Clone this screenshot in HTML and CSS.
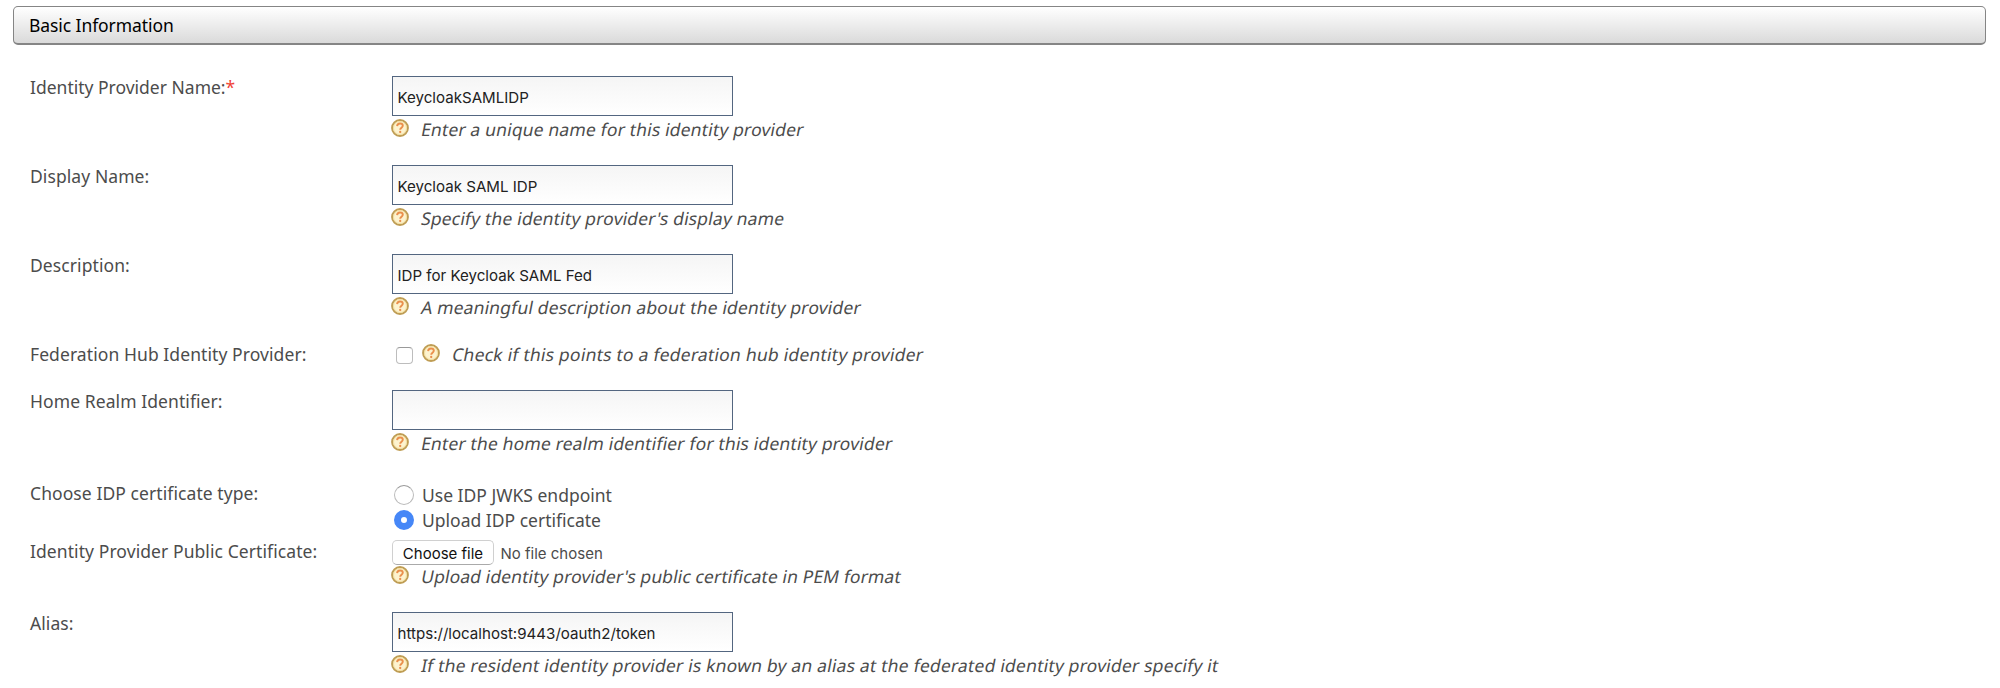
FILE: index.html
```html
<!DOCTYPE html>
<html lang="en">
<head>
<meta charset="utf-8">
<title>Basic Information</title>
<link rel="stylesheet" href="styles.css">
</head>
<body>
<svg class="defs" width="0" height="0">
  <symbol id="help" viewBox="0 0 18 18">
    <circle cx="9" cy="9" r="7.9" fill="#fdf3cf" stroke="#bf9d54" stroke-width="2"/>
    <circle cx="9" cy="9" r="6.5" fill="none" stroke="#f3dfa0" stroke-width="1"/>
    <path d="M6.1 7.1C6.2 5.3 7.4 4.5 9 4.5s2.8.9 2.8 2.3c0 1.9-2.6 1.9-2.6 3.9" fill="none" stroke="#ea8f4c" stroke-width="1.9"/>
    <circle cx="9.2" cy="13" r="1.15" fill="#ea8f4c"/>
  </symbol>
</svg>
<h2 class="section-title">Basic Information</h2>
<form class="form">
  <div class="row">
    <label class="label label-name">Identity Provider Name:<span class="required">*</span></label>
    <div class="field">
      <input class="input" type="text" value="KeycloakSAMLIDP">
      <div class="help"><svg class="icon"><use href="#help"/></svg><span class="hint">Enter a unique name for this identity provider</span></div>
    </div>
  </div>
  <div class="row">
    <label class="label">Display Name:</label>
    <div class="field">
      <input class="input" type="text" value="Keycloak SAML IDP">
      <div class="help"><svg class="icon"><use href="#help"/></svg><span class="hint">Specify the identity provider's display name</span></div>
    </div>
  </div>
  <div class="row">
    <label class="label">Description:</label>
    <div class="field">
      <input class="input" type="text" value="IDP for Keycloak SAML Fed">
      <div class="help"><svg class="icon"><use href="#help"/></svg><span class="hint">A meaningful description about the identity provider</span></div>
    </div>
  </div>
  <div class="row row-check">
    <label class="label">Federation Hub Identity Provider:</label>
    <div class="field field-check">
      <input class="checkbox" type="checkbox">
      <div class="help"><svg class="icon"><use href="#help"/></svg><span class="hint">Check if this points to a federation hub identity provider</span></div>
    </div>
  </div>
  <div class="row row-realm">
    <label class="label">Home Realm Identifier:</label>
    <div class="field">
      <input class="input" type="text" value="">
      <div class="help"><svg class="icon"><use href="#help"/></svg><span class="hint">Enter the home realm identifier for this identity provider</span></div>
    </div>
  </div>
  <div class="row row-type">
    <label class="label">Choose IDP certificate type:</label>
    <div class="field">
      <label class="option"><input class="radio" type="radio" name="cert"><span>Use IDP JWKS endpoint</span></label>
      <label class="option"><input class="radio" type="radio" name="cert" checked><span>Upload IDP certificate</span></label>
    </div>
  </div>
  <div class="row row-cert">
    <label class="label">Identity Provider Public Certificate:</label>
    <div class="field">
      <div class="file"><button class="file-button" type="button">Choose file</button><span class="file-name">No file chosen</span></div>
      <div class="help"><svg class="icon"><use href="#help"/></svg><span class="hint">Upload identity provider's public certificate in PEM format</span></div>
    </div>
  </div>
  <div class="row">
    <label class="label">Alias:</label>
    <div class="field">
      <input class="input" type="text" value="https://localhost:9443/oauth2/token">
      <div class="help"><svg class="icon"><use href="#help"/></svg><span class="hint hint-long">If the resident identity provider is known by an alias at the federated identity provider specify it</span></div>
    </div>
  </div>
</form>
</body>
</html>
```
FILE: styles.css
```css
* { box-sizing: border-box; }
body {
  margin: 0;
  height: 688px;
  overflow: hidden;
  background: #fff;
  color: #4c4c4c;
  font-family: "Noto Sans", sans-serif;
  font-size: 17.5px;
}
.defs { display: block; }
.section-title {
  height: 39px;
  margin: 6px 14px 0 13px;
  padding-left: 15px;
  border: 1px solid #858585;
  border-bottom-width: 2px;
  border-radius: 5px;
  background: linear-gradient(#fff, #dadada);
  color: #000;
  font-size: 17.5px;
  font-weight: 400;
  letter-spacing: -0.08px;
  line-height: 36px;
}
.form { padding: 31px 0 0 30px; }
.row { display: grid; grid-template-columns: 361.5px 1fr; height: 89px; }
.row-check { height: 47px; }
.row-realm { height: 92px; }
.row-type { height: 58px; }
.row-cert { height: 72px; }
.label { line-height: 22px; letter-spacing: 0.08px; white-space: nowrap; }
.label-name { letter-spacing: 0; }
.required { color: #f04438; }
.input {
  display: block;
  width: 341px;
  height: 40px;
  padding: 3px 5px 0;
  border: 1px solid #536680;
  border-radius: 0;
  background: linear-gradient(#f5f5f5, #fff);
  color: #222;
  font-family: Inter, sans-serif;
  font-size: 15.1px;
}
.help { display: flex; height: 28px; margin-left: -0.5px; padding-top: 3px; }
.icon { width: 18px; height: 18px; margin-right: 11.5px; }
.hint {
  transform: skewX(-11deg);
  line-height: 21px;
  letter-spacing: 0.16px;
  white-space: nowrap;
}
.hint-long { letter-spacing: 0.2px; }
.field-check { display: flex; }
.checkbox {
  appearance: none;
  width: 17px;
  height: 17px;
  margin: 4px 10px 0 4px;
  border: 1px solid #bdbdbd;
  border-top-color: #999;
  border-radius: 4px;
}
.field-check .help { padding-top: 1px; }
.field-check .hint { letter-spacing: 0.22px; }
.option { display: flex; align-items: center; height: 24.5px; padding-left: 2.5px; }
.row-type .field { padding-top: 1px; }
.radio {
  appearance: none;
  width: 20px;
  height: 20px;
  margin: 0 8px 0 0;
  border: 1px solid #bbb;
  border-top-color: #999;
  border-radius: 50%;
}
.radio:checked { border: 7px solid #4687f7; background: #fff; }
.file { display: flex; align-items: center; height: 25px; }
.file-button {
  width: 102px;
  height: 25px;
  padding: 1px 0 0 1px;
  border: 1px solid #d0d0d0;
  border-bottom-color: #aaa;
  border-radius: 5px;
  background: #fff;
  color: #111;
  font-family: Inter, sans-serif;
  font-size: 15px;
}
.file-name { margin-left: 7px; padding-top: 1px; font-family: Inter, sans-serif; font-size: 15px; }
.row-cert .help { padding-top: 1px; }
.row-cert .hint { letter-spacing: 0.1px; }
```
